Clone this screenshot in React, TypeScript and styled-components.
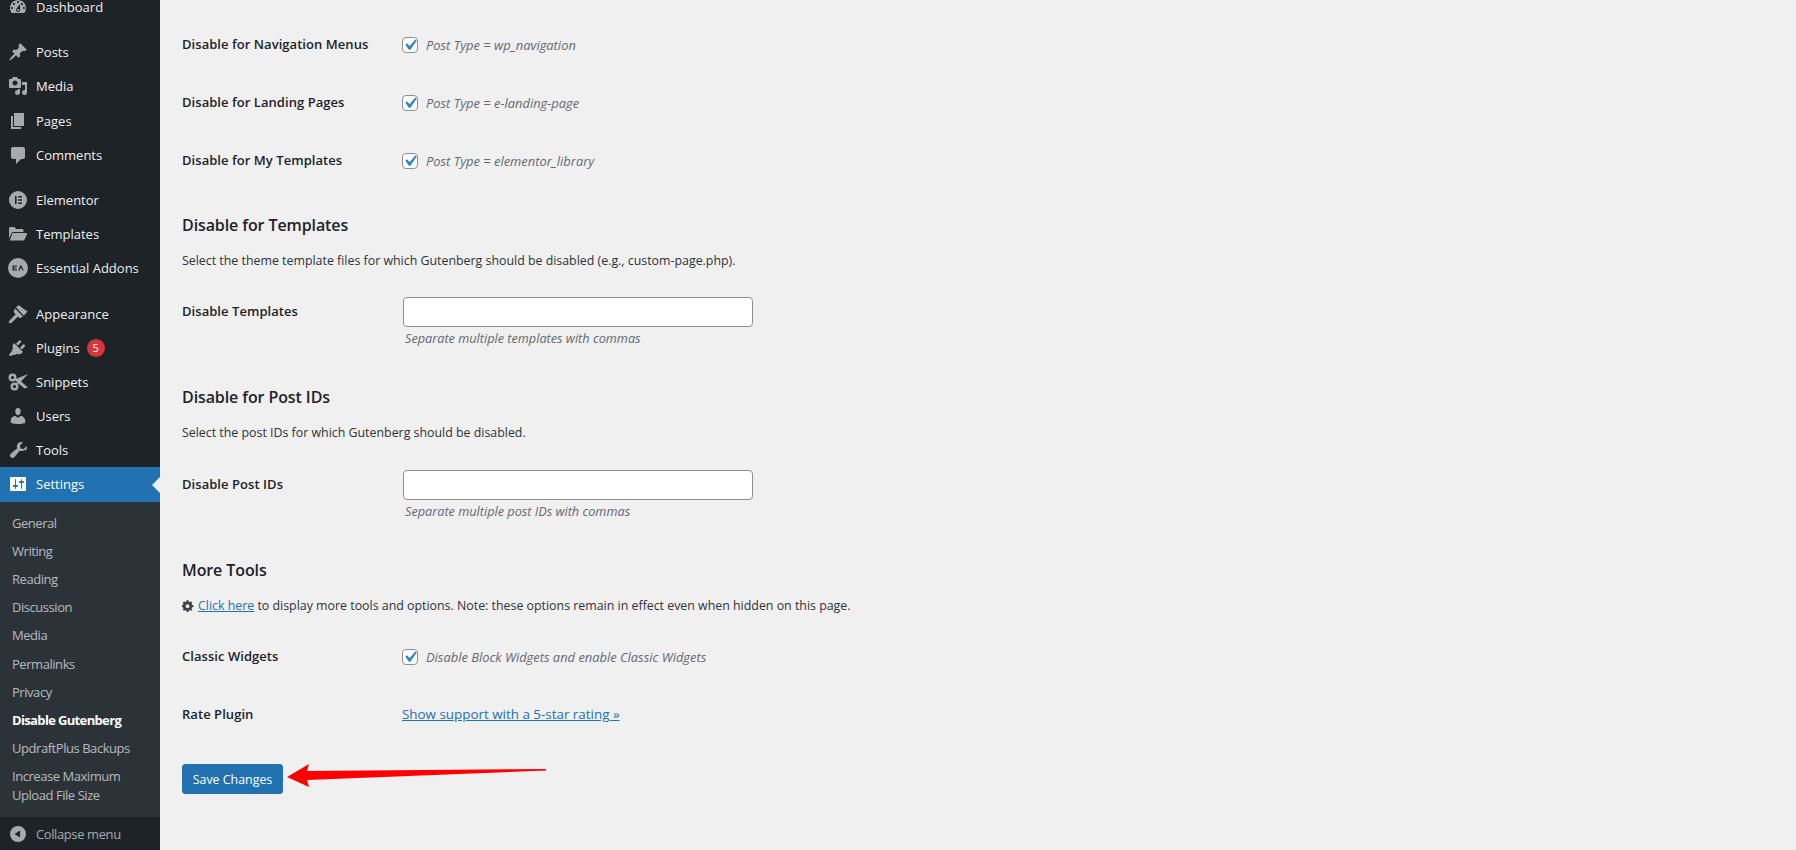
import React from 'react'
import styled, { createGlobalStyle } from 'styled-components'

const GlobalStyle = createGlobalStyle`
  html, body {
    margin: 0;
    padding: 0;
    height: 850px;
    overflow: hidden;
    background: #f0f0f1;
    font-family: "Open Sans", "Noto Sans", sans-serif;
  }
`

const Page = styled.div`
  display: flex;
  height: 850px;
  overflow: hidden;
`

const Sidebar = styled.nav`
  width: 160px;
  flex: none;
  height: 850px;
  background: #1d2327;
  display: flex;
  flex-direction: column;
  overflow: hidden;
`

const Menu = styled.ul`
  list-style: none;
  margin: -10px 0 0;
  padding: 0;
`

const MenuItem = styled.li<{ $gap?: number; $active?: boolean }>`
  position: relative;
  display: flex;
  align-items: center;
  box-sizing: border-box;
  height: 34.2px;
  margin-top: ${p => p.$gap ?? 0}px;
  padding-left: 8px;
  padding-bottom: ${p => (p.$active ? 1 : 0)}px;
  color: ${p => (p.$active ? '#fff' : '#f0f0f1')};
  background: ${p => (p.$active ? '#2271b1' : 'transparent')};
  font-size: 13px;
  svg {
    flex: none;
    width: 20px;
    height: 20px;
    fill: ${p => (p.$active ? '#fff' : '#a7aaad')};
    margin-right: 8px;
  }
  ${p =>
    p.$active &&
    `&::after {
      content: '';
      position: absolute;
      right: 0;
      top: 50%;
      margin-top: -8px;
      border: 8px solid transparent;
      border-right-color: #f0f0f1;
      border-left-width: 0;
    }`}
`

const Badge = styled.span`
  display: inline-flex;
  align-items: center;
  justify-content: center;
  width: 18px;
  height: 18px;
  margin-left: 7px;
  border-radius: 50%;
  background: #d63638;
  color: #fff;
  font-size: 11px;
`

const SubMenu = styled.ul`
  list-style: none;
  margin: 0;
  padding: 7px 0 8px;
  background: #2c3338;
`

const SubItem = styled.li<{ $current?: boolean; $tight?: boolean }>`
  padding: ${p => (p.$tight ? 5 : 4)}px 12px 4px;
  font-size: 13px;
  line-height: ${p => (p.$tight ? '19px' : '20.2px')};
  letter-spacing: ${p => (p.$current ? '-0.65px' : '-0.45px')};
  color: ${p => (p.$current ? '#fff' : 'rgba(240, 246, 252, 0.7)')};
  font-weight: ${p => (p.$current ? 700 : 400)};
`

const Collapse = styled.div`
  display: flex;
  align-items: center;
  height: 35px;
  padding-left: 8px;
  color: #a7aaad;
  font-size: 13px;
  letter-spacing: -0.4px;
  svg {
    width: 20px;
    height: 20px;
    fill: #a7aaad;
    margin-right: 8px;
  }
`

const Main = styled.main`
  position: relative;
  flex: 1;
  padding: 0 22px;
  color: #1d2327;
  font-size: 13px;
`

const Row = styled.div<{ $height: number }>`
  display: flex;
  align-items: flex-start;
  height: ${p => p.$height}px;
`

const Label = styled.div<{ $inset?: boolean }>`
  width: 220px;
  flex: none;
  padding-top: ${p => (p.$inset ? 4 : 0)}px;
  font-size: 13px;
  font-weight: 600;
  line-height: 20px;
  letter-spacing: 0.05px;
`

const CheckRow = styled.label`
  display: flex;
  align-items: center;
  gap: 8px;
  margin-top: 1px;
`

const CheckBox = styled.span`
  display: flex;
  flex: none;
  width: 14px;
  height: 14px;
  border: 1px solid #8c8f94;
  border-radius: 4px;
  background: #fff;
  align-items: center;
  justify-content: center;
  svg {
    flex: none;
    width: 22px;
    height: 22px;
    fill: #3582c4;
  }
`

const Note = styled.span`
  color: #646970;
  font-style: italic;
  font-size: 12.9px;
  line-height: 20px;
`

const Heading = styled.h2`
  margin: 0;
  font-size: 16px;
  font-weight: 600;
  line-height: 22px;
  letter-spacing: -0.1px;
`

const Description = styled.p`
  margin: 0;
  display: flex;
  align-items: center;
  font-size: 12.38px;
  line-height: 20px;
  color: #2c3338;
  svg {
    width: 12px;
    height: 12px;
    margin-right: 4px;
    fill: #3c434a;
  }
`

const Field = styled.div`
  margin-left: 1px;
`

const TextInput = styled.div`
  width: 350px;
  height: 30px;
  box-sizing: border-box;
  border: 1px solid #8c8f94;
  border-radius: 4px;
  background: #fff;
`

const Hint = styled.div`
  margin: 1px 0 0 2px;
  color: #646970;
  font-style: italic;
  font-size: 12.7px;
  line-height: 20px;
`

const Link = styled.a`
  color: #2271b1;
  text-decoration: underline;
`

const RateLink = styled(Link)`
  display: block;
  font-size: 13.4px;
  line-height: 20px;
`

const SaveButton = styled.button`
  display: block;
  width: 101px;
  height: 30px;
  padding: 0;
  border: 1px solid #2271b1;
  border-radius: 3px;
  background: #2271b1;
  color: #fff;
  font-family: inherit;
  font-size: 12.4px;
`

const Arrow = styled.svg`
  position: absolute;
  left: 127px;
  top: 764px;
  width: 260px;
  height: 24px;
`

const paths = {
  dashboard:
    'M3.76 16h12.48c1.1-1.37 1.76-3.11 1.76-5 0-4.42-3.58-8-8-8s-8 3.58-8 8c0 1.89.66 3.63 1.76 5zM10 4c.55 0 1 .45 1 1s-.45 1-1 1-1-.45-1-1 .45-1 1-1zM6 6c.55 0 1 .45 1 1s-.45 1-1 1-1-.45-1-1 .45-1 1-1zm8 0c.55 0 1 .45 1 1s-.45 1-1 1-1-.45-1-1 .45-1 1-1zm-5.37 5.55L12 7v6c0 1.1-.9 2-2 2s-2-.9-2-2c0-.57.24-1.08.63-1.45zM4 10c.55 0 1 .45 1 1s-.45 1-1 1-1-.45-1-1 .45-1 1-1zm12 0c.55 0 1 .45 1 1s-.45 1-1 1-1-.45-1-1 .45-1 1-1zm-5 3c0-.55-.45-1-1-1s-1 .45-1 1 .45 1 1 1 1-.45 1-1z',
  post: 'M10.44 3.02l1.82-1.82 6.36 6.35-1.83 1.82c-1.05-.68-2.48-.57-3.41.36l-.75.75c-.92.93-1.04 2.35-.35 3.41l-1.83 1.82-2.41-2.41-2.8 2.79c-.42.42-3.38 2.71-3.8 2.29s1.86-3.39 2.28-3.81l2.79-2.79L4.1 9.36l1.83-1.82c1.05.69 2.48.57 3.4-.36l.75-.75c.93-.92 1.05-2.35.36-3.41z',
  media:
    'M13 11V4c0-.55-.45-1-1-1h-1.67L9 1H5L3.67 3H2c-.55 0-1 .45-1 1v7c0 .55.45 1 1 1h10c.55 0 1-.45 1-1zM7 4.5c1.38 0 2.5 1.12 2.5 2.5S8.38 9.5 7 9.5 4.5 8.38 4.5 7 5.62 4.5 7 4.5zM14 6h5v10.5c0 1.38-1.12 2.5-2.5 2.5S14 17.88 14 16.5s1.12-2.5 2.5-2.5c.17 0 .34.02.5.05V9h-3V6zm-4 8.05V13h2v3.500c0 1.38-1.12 2.5-2.5 2.5S7 17.88 7 16.5 8.12 14 9.5 14c.17 0 .34.02.5.05z',
  page: 'M6 15V2h10v13H6zm-1 1h8v2H3V5h2v11z',
  comments:
    'M5 2h10c1.1 0 2 .9 2 2v8c0 1.1-.9 2-2 2h-2l-5 5v-5H5c-1.1 0-2-.9-2-2V4c0-1.1.9-2 2-2z',
  elementor:
    'M10 1a9 9 0 1 0 0 18 9 9 0 0 0 0-18zM7 6h1.6v8H7V6zm3.200 0H14v1.600h-3.800V6zm0 3.200H14v1.600h-3.800V9.200zm0 3.200H14V14h-3.800v-1.600z',
  essential:
    'M10 0a10 10 0 1 0 0 20 10 10 0 0 0 0-20zM4.500 7.500H9v1.100H5.700v.9H8.500v1.100H5.700v.9H9v1.100H4.500V7.500zm7.700 0h1.200l2.300 5.100h-1.300L13 9.200l-1.400 3.400h-1.300l1.900-5.100z',
  folder:
    'M1 4.500C1 3.700 1.700 3 2.500 3h4L8 5h6c.800 0 1.500.700 1.500 1.500V8H5.300c-.700 0-1.300.400-1.600 1L1 14.500V4.500zM5 9h13.500c.500 0 .800.500.600 1l-2.800 6c-.200.400-.500.600-.900.600H1.800L4.300 9.500C4.500 9.200 4.700 9 5 9z',
  appearance:
    'M8 3.200L10 1.500C12 1.300 13.200 2.800 14.800 4.300 16.300 5.800 18 6 19.500 7.500L15.800 11.800 8 3.200zM7 4.300L14.700 12.200 13.200 13.700C12.600 14.200 11.700 14.200 11.100 13.700L9.900 12.500 4.200 18.300C3.200 19.300 1 19.500.8 18.800.5 18 1.400 16.700 2.300 15.800L7.700 10.200 6.200 8.700C5.600 8.100 5.600 7.200 6.200 6.600L7 4.300z',
  plugins:
    'M13.110 4.360L9.870 7.600 8 5.730l3.240-3.240c.350-.340 1.050-.200 1.560.320.520.510.660 1.210.310 1.550zm3.920 3.920l-3.240 3.240-1.870-1.870 3.240-3.240c.340-.350 1.040-.210 1.550.310.520.510.660 1.210.320 1.560zM5.110 6.130l.910-1.120 9.010 9.010-1.120.910c-1.400 1.400-3.400 1.700-5 .900l-.900.900-1.500 0L2 18.100.9 17l3.300-4.400v-1.500l.900-.900c-.800-1.600-.500-3.600 0-4.070z',
  users:
    'M10 9.250c-2.270 0-2.730-3.440-2.730-3.440C7 4.020 7.820 2 9.970 2c2.160 0 2.980 2.020 2.710 3.810 0 0-.410 3.440-2.680 3.440zm0 2.570L12.720 10c2.390 0 4.520 2.330 4.520 4.530v2.490s-3.650 1.130-7.240 1.130c-3.650 0-7.240-1.130-7.240-1.130v-2.490c0-2.250 1.940-4.480 4.470-4.480z',
  tools:
    'M16.680 9.770c-1.340 1.340-3.300 1.670-4.950.990l-5.410 6.520c-.990.990-2.590.990-3.580 0s-.990-2.590 0-3.570l6.520-5.420c-.680-1.650-.350-3.610.990-4.950 1.280-1.280 3.120-1.640 4.720-1.080l-2.950 2.950.530 3.180 3.180.530 2.950-2.950c.570 1.600.200 3.440-1.080 4.720z',
  settings:
    'M18 16V4c0-.55-.45-1-1-1H3c-.55 0-1 .45-1 1v12c0 .55.45 1 1 1h14c.55 0 1-.45 1-1zM8 11h1c.55 0 1 .45 1 1s-.45 1-1 1H8v1.500c0 .280-.220.500-.500.500s-.500-.220-.500-.500V13H6c-.550 0-1-.450-1-1s.450-1 1-1h1V5.500c0-.280.220-.500.500-.500s.500.220.500.500V11zm5-2h-1c-.550 0-1-.450-1-1s.450-1 1-1h1V5.500c0-.280.220-.500.500-.500s.500.220.500.500V7h1c.550 0 1 .450 1 1s-.450 1-1 1h-1v5.500c0 .280-.220.500-.500.500s-.500-.220-.500-.500V9z',
  collapse: 'M10 2a8 8 0 1 0 0 16 8 8 0 0 0 0-16zm2 4.500v7L6.500 10 12 6.500z',
  check: 'M14.830 4.890l1.340.940-5.810 8.380H9.020L5.780 9.670l1.340-1.250 2.570 2.400z',
  gear: 'M18 12h-2.180c-.210.790-.550 1.530-1 2.180l1.540 1.540-2.640 2.640-1.540-1.540c-.650.450-1.390.790-2.180 1V20H6.500v-2.180c-.790-.210-1.530-.550-2.180-1l-1.540 1.540L.140 15.720l1.540-1.540c-.450-.650-.790-1.390-1-2.180H-1V8.500h1.680c.210-.790.550-1.530 1-2.180L.140 4.780l2.640-2.640 1.540 1.540c.650-.450 1.390-.790 2.180-1V.500h3.500v2.180c.790.210 1.530.550 2.180 1l1.540-1.540 2.640 2.640-1.540 1.540c.450.650.790 1.390 1 2.180H18V12zM8.250 7a3.250 3.250 0 1 0 0 6.500 3.250 3.250 0 0 0 0-6.500z',
}

const Icon = ({ d }: { d: string }) => (
  <svg viewBox="0 0 20 20">
    <path d={d} fillRule="evenodd" />
  </svg>
)

const Scissors = () => (
  <svg viewBox="0 0 20 20">
    <circle cx="4.500" cy="5.500" r="2.800" fill="none" stroke="#a7aaad" strokeWidth="2.400" />
    <circle cx="6.500" cy="14.500" r="2.800" fill="none" stroke="#a7aaad" strokeWidth="2.400" />
    <path d="M6.500 7.500L20 2 13 9.500 20 15.500 16.500 16.500 10.500 11.500 8.500 12.500 9 10z" />
  </svg>
)

const topItems = [
  { label: 'Dashboard', icon: <Icon d={paths.dashboard} /> },
  { label: 'Posts', icon: <Icon d={paths.post} />, gap: 11 },
  { label: 'Media', icon: <Icon d={paths.media} /> },
  { label: 'Pages', icon: <Icon d={paths.page} /> },
  { label: 'Comments', icon: <Icon d={paths.comments} /> },
  { label: 'Elementor', icon: <Icon d={paths.elementor} />, gap: 11 },
  { label: 'Templates', icon: <Icon d={paths.folder} /> },
  { label: 'Essential Addons', icon: <Icon d={paths.essential} /> },
  { label: 'Appearance', icon: <Icon d={paths.appearance} />, gap: 11 },
  { label: 'Plugins', icon: <Icon d={paths.plugins} />, badge: '5' },
  { label: 'Snippets', icon: <Scissors /> },
  { label: 'Users', icon: <Icon d={paths.users} /> },
  { label: 'Tools', icon: <Icon d={paths.tools} /> },
]

const subItems = [
  'General',
  'Writing',
  'Reading',
  'Discussion',
  'Media',
  'Permalinks',
  'Privacy',
  'Disable Gutenberg',
  'UpdraftPlus Backups',
]

const postTypes = [
  { label: 'Disable for Navigation Menus', note: 'Post Type = wp_navigation' },
  { label: 'Disable for Landing Pages', note: 'Post Type = e-landing-page' },
  { label: 'Disable for My Templates', note: 'Post Type = elementor_library' },
]

const Check = () => (
  <CheckBox>
    <svg viewBox="0 0 20 20">
      <path d={paths.check} />
    </svg>
  </CheckBox>
)

const Spacer = styled.div<{ $height: number }>`
  height: ${p => p.$height}px;
`

export default function App() {
  return (
    <Page>
      <GlobalStyle />
      <Sidebar>
        <Menu>
          {topItems.map(item => (
            <MenuItem key={item.label} $gap={item.gap}>
              {item.icon}
              {item.label}
              {item.badge && <Badge>{item.badge}</Badge>}
            </MenuItem>
          ))}
          <MenuItem $active>
            <Icon d={paths.settings} />
            Settings
          </MenuItem>
        </Menu>
        <SubMenu>
          {subItems.map(label => (
            <SubItem key={label} $current={label === 'Disable Gutenberg'}>
              {label}
            </SubItem>
          ))}
          <SubItem $tight>
            Increase Maximum
            <br />
            Upload File Size
          </SubItem>
        </SubMenu>
        <Collapse>
          <Icon d={paths.collapse} />
          Collapse menu
        </Collapse>
      </Sidebar>
      <Main>
        <Spacer $height={34} />
        {postTypes.map(row => (
          <Row key={row.label} $height={58}>
            <Label>{row.label}</Label>
            <CheckRow>
              <Check />
              <Note>{row.note}</Note>
            </CheckRow>
          </Row>
        ))}
        <Spacer $height={6} />
        <Heading>Disable for Templates</Heading>
        <Spacer $height={15} />
        <Description>
          Select the theme template files for which Gutenberg should be disabled (e.g., custom-page.php).
        </Description>
        <Spacer $height={26} />
        <Row $height={89}>
          <Label $inset>Disable Templates</Label>
          <Field>
            <TextInput />
            <Hint>Separate multiple templates with commas</Hint>
          </Field>
        </Row>
        <Heading>Disable for Post IDs</Heading>
        <Spacer $height={15} />
        <Description>Select the post IDs for which Gutenberg should be disabled.</Description>
        <Spacer $height={27} />
        <Row $height={89}>
          <Label $inset>Disable Post IDs</Label>
          <Field>
            <TextInput />
            <Hint>Separate multiple post IDs with commas</Hint>
          </Field>
        </Row>
        <Heading>More Tools</Heading>
        <Spacer $height={15} />
        <Description>
          <svg viewBox="-1 0 20 20">
            <path d={paths.gear} fillRule="evenodd" />
          </svg>
          <span>
            <Link href="#">Click here</Link> to display more tools and options. Note: these options remain in effect
            even when hidden on this page.
          </span>
        </Description>
        <Spacer $height={30} />
        <Row $height={58}>
          <Label>Classic Widgets</Label>
          <CheckRow>
            <Check />
            <Note>Disable Block Widgets and enable Classic Widgets</Note>
          </CheckRow>
        </Row>
        <Row $height={60}>
          <Label>Rate Plugin</Label>
          <RateLink href="#">Show support with a 5-star rating »</RateLink>
        </Row>
        <SaveButton>Save Changes</SaveButton>
        <Arrow viewBox="0 0 260 24">
          <path d="M0 13 L22 0 L20 7 L259 5 L259 6.500 L20 16 L22 23 Z" fill="#ff0000" />
        </Arrow>
      </Main>
    </Page>
  )
}
